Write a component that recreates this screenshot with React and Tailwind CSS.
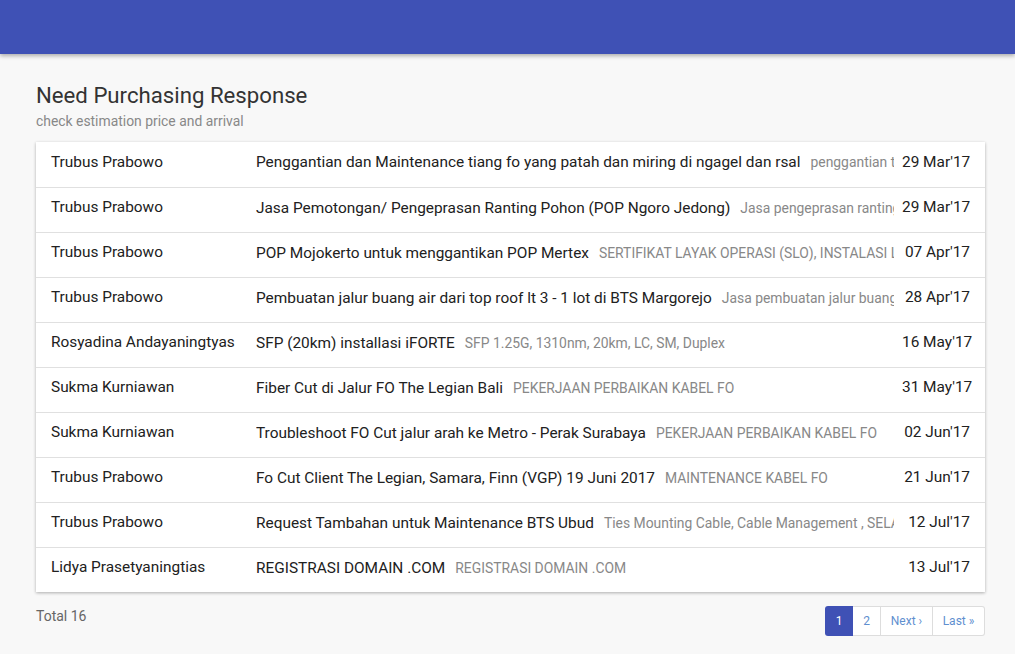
const rows = [
  ["Trubus Prabowo", "Penggantian dan Maintenance tiang fo yang patah dan miring di ngagel dan rsal", "penggantian tiang fo yang patah", "29 Mar'17"],
  ["Trubus Prabowo", "Jasa Pemotongan/ Pengeprasan Ranting Pohon (POP Ngoro Jedong)", "Jasa pengeprasan ranting pohon", "29 Mar'17"],
  ["Trubus Prabowo", "POP Mojokerto untuk menggantikan POP Mertex", "SERTIFIKAT LAYAK OPERASI (SLO), INSTALASI LISTRIK", "07 Apr'17"],
  ["Trubus Prabowo", "Pembuatan jalur buang air dari top roof lt 3 - 1 lot di BTS Margorejo", "Jasa pembuatan jalur buang air", "28 Apr'17"],
  ["Rosyadina Andayaningtyas", "SFP (20km) installasi iFORTE", "SFP 1.25G, 1310nm, 20km, LC, SM, Duplex", "16 May'17"],
  ["Sukma Kurniawan", "Fiber Cut di Jalur FO The Legian Bali", "PEKERJAAN PERBAIKAN KABEL FO", "31 May'17"],
  ["Sukma Kurniawan", "Troubleshoot FO Cut jalur arah ke Metro - Perak Surabaya", "PEKERJAAN PERBAIKAN KABEL FO", "02 Jun'17"],
  ["Trubus Prabowo", "Fo Cut Client The Legian, Samara, Finn (VGP) 19 Juni 2017", "MAINTENANCE KABEL FO", "21 Jun'17"],
  ["Trubus Prabowo", "Request Tambahan untuk Maintenance BTS Ubud", "Ties Mounting Cable, Cable Management , SELANG", "12 Jul'17"],
  ["Lidya Prasetyaningtias", "REGISTRASI DOMAIN .COM", "REGISTRASI DOMAIN .COM", "13 Jul'17"],
];

export default function App() {
  return (
    <div className="min-h-screen bg-[#f8f8f8] font-['Roboto',sans-serif] text-[#212121]">
      <div className="h-[54px] bg-[#3f51b5] shadow-[0_2px_4px_rgba(0,0,0,0.3)]" />

      <main className="pl-[36px] pr-[30px] pt-[27px]">
        <h1 className="text-[22.2px] leading-[28px] text-[#333]">Need Purchasing Response</h1>
        <p className="mt-[4px] text-[13.9px] leading-[16px] text-[#888]">check estimation price and arrival</p>

        <div className="mt-[13px] bg-white shadow-[0_1px_3px_rgba(0,0,0,0.3)]">
          {rows.map((r, i) => (
            <div
              key={i}
              className={`flex h-[45px] items-center px-[15px] pb-[4px] ${i > 0 ? "border-t border-[#e0e0e0]" : ""}`}
            >
              <div className="w-[205px] shrink-0 whitespace-nowrap text-[15.4px]">{r[0]}</div>
              <div className="min-w-0 flex-1 overflow-hidden whitespace-nowrap">
                <span className="text-[15.4px]">{r[1]}</span>
                <span className="ml-[10px] text-[13.9px] text-[#888]">{r[2]}</span>
              </div>
              <div className="ml-[8px] w-[68px] shrink-0 text-right text-[15.4px] whitespace-nowrap">{r[3]}</div>
            </div>
          ))}
        </div>

        <div className="mt-[14px] flex items-start justify-between">
          <div className="text-[14px] leading-[20px] text-[#666]">Total 16</div>
          <div className="flex h-[30px] text-[12px] text-[#5f8fcf]">
            <span className="flex w-[28px] items-center justify-center rounded-l-[3px] bg-[#3f51b5] text-white">1</span>
            <span className="flex w-[27px] items-center justify-center border-y border-[#ddd] bg-white">2</span>
            <span className="flex w-[53px] items-center justify-center border border-[#ddd] bg-white">Next ›</span>
            <span className="flex w-[52px] items-center justify-center rounded-r-[3px] border-y border-r border-[#ddd] bg-white">Last »</span>
          </div>
        </div>
      </main>
    </div>
  );
}
